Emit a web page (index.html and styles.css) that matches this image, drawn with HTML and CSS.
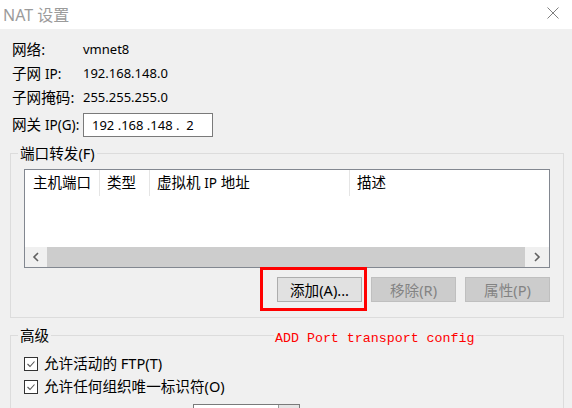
FILE: index.html
```html
<!DOCTYPE html>
<html lang="zh-CN">
<head>
<meta charset="utf-8">
<title>NAT 设置</title>
<link rel="stylesheet" href="styles.css">
</head>
<body>
<div class="dialog">
  <header class="titlebar">
    <span class="title">NAT 设置</span>
    <svg class="close" width="12" height="12" viewBox="0 0 12 12" aria-label="关闭">
      <path d="M0.5 0.5 L11.5 11.5 M11.5 0.5 L0.5 11.5" stroke="#7f7f7f" stroke-width="1" fill="none"/>
    </svg>
  </header>
  <main class="content">
    <div class="info">
      <span class="lbl">网络:</span><span class="val">vmnet8</span>
      <span class="lbl">子网 <span class="lat">IP:</span></span><span class="val">192.168.148.0</span>
      <span class="lbl">子网掩码:</span><span class="val">255.255.255.0</span>
      <span class="lbl gw">网关 <span class="lat">IP(G):</span></span><span class="ipbox">192 .168 .148 .  2</span>
    </div>

    <fieldset class="group">
      <legend>端口转发(F)</legend>
      <div class="listview">
        <div class="lv-head">
          <span class="col c1">主机端口</span>
          <span class="col c2">类型</span>
          <span class="col c3">虚拟机 <span class="lat">IP</span> 地址</span>
          <span class="col c4">描述</span>
        </div>
        <div class="lv-body"></div>
        <div class="hscroll">
          <span class="sb-btn left">
            <svg width="8" height="10" viewBox="0 0 8 10"><path d="M6 1 L2 5 L6 9" stroke="#606060" stroke-width="1.6" fill="none"/></svg>
          </span>
          <span class="sb-thumb"></span>
          <span class="sb-btn right">
            <svg width="8" height="10" viewBox="0 0 8 10"><path d="M2 1 L6 5 L2 9" stroke="#606060" stroke-width="1.6" fill="none"/></svg>
          </span>
        </div>
      </div>
      <div class="buttons">
        <span class="btn-wrap">
          <button class="btn">添加(A)...</button>
          <span class="mark"></span>
        </span>
        <button class="btn" disabled>移除(R)</button>
        <button class="btn" disabled>属性(P)</button>
      </div>
    </fieldset>

    <fieldset class="group adv">
      <legend>高级<span class="note">ADD Port transport config</span></legend>
      <label class="check"><span class="box"><svg width="12" height="12" viewBox="0 0 12 12"><path d="M2.5 6 L5 8.5 L9.5 3.5" stroke="#555" stroke-width="1.1" fill="none"/></svg></span>允许活动的 FTP(T)</label>
      <label class="check"><span class="box"><svg width="12" height="12" viewBox="0 0 12 12"><path d="M2.5 6 L5 8.5 L9.5 3.5" stroke="#555" stroke-width="1.1" fill="none"/></svg></span>允许任何组织唯一标识符(O)</label>
      <div class="combo"><span class="combo-btn"></span></div>
    </fieldset>
  </main>
</div>
</body>
</html>
```

FILE: styles.css
```css
* { box-sizing: border-box; }

html, body {
  margin: 0;
  padding: 0;
}

body {
  width: 572px;
  height: 408px;
  overflow: hidden;
  background: #f0f0f0;
  font-family: "Noto Sans", "Noto Sans CJK SC", sans-serif;
  font-size: 14.6px;
  color: #000;
}

.dialog {
  width: 572px;
  height: 408px;
}

.titlebar {
  height: 29px;
  background: #fff;
  display: flex;
  align-items: center;
  justify-content: space-between;
  padding: 0 13px 0 3px;
}

.title {
  font-size: 16px;
  color: #9b9b9b;
  line-height: 20px;
}

.close {
  display: block;
  margin-top: -3px;
}

.content {
  padding-top: 8px;
}

.info {
  display: grid;
  grid-template-columns: 71px max-content;
  grid-template-rows: 24px 24px 24px 28px;
  align-items: center;
  padding-left: 12px;
}

.lbl {
  line-height: 24px;
  white-space: nowrap;
}

.lat {
  font-size: 13.5px;
}

.lbl.gw, .ipbox {
  align-self: end;
}

.val {
  font-size: 13px;
  line-height: 24px;
}

.ipbox {
  width: 130px;
  height: 24px;
  border: 1px solid #7a7a7a;
  background: #fff;
  font-size: 13px;
  line-height: 22px;
  padding-left: 8px;
  white-space: pre;
}

.group {
  position: relative;
  margin: 7px 8px 0 10px;
  padding: 7px 13px 15px 13px;
  border: 1px solid #dcdcdc;
  min-width: 0;
}

.group legend {
  position: relative;
  margin-left: -6px;
  padding: 0 2px;
  line-height: 18px;
  font-size: 14.6px;
}

.listview {
  height: 99px;
  border: 1px solid #828790;
  background: #fff;
  display: flex;
  flex-direction: column;
}

.lv-head {
  height: 26px;
  display: flex;
  font-size: 14.5px;
}

.col {
  line-height: 25px;
  height: 26px;
  padding-left: 7px;
  border-right: 1px solid #e5e5e5;
  white-space: nowrap;
}

.c1 { width: 75px; padding-left: 8px; }
.c2 { width: 50px; }
.c3 { width: 200px; }
.c4 { flex: 1; border-right: none; }

.lv-body {
  flex: 1;
}

.hscroll {
  height: 20px;
  display: flex;
  background: #f0f0f0;
}

.sb-btn {
  display: flex;
  align-items: center;
  justify-content: center;
  background: #f0f0f0;
}

.sb-btn.left { width: 22px; }
.sb-btn.right { width: 24px; }

.sb-thumb {
  flex: 1;
  background: #cdcdcd;
}

.buttons {
  display: flex;
  justify-content: flex-end;
  gap: 9px;
  margin-top: 9px;
}

.btn-wrap {
  position: relative;
  display: block;
}

.btn {
  display: block;
  width: 85px;
  height: 25px;
  border: 1px solid #adadad;
  background: #e1e1e1;
  font-family: inherit;
  font-size: 14.6px;
  color: #000;
  padding: 0;
  line-height: 22px;
}

.btn:disabled {
  background: #cccccc;
  border-color: #bfbfbf;
  color: #838383;
}

.mark {
  position: absolute;
  left: -17px;
  top: -10px;
  width: 107px;
  height: 44px;
  border: 3px solid #ff0000;
}

.adv {
  margin-top: 8px;
  padding: 8px 13px 0 13px;
  height: 120px;
}

.note {
  position: absolute;
  left: 256px;
  top: 4px;
  line-height: 18px;
  font-family: "Liberation Mono", monospace;
  font-size: 13.3px;
  color: #ff0000;
  background: #f0f0f0;
  white-space: nowrap;
  padding: 0 1px;
}

.check {
  display: flex;
  align-items: center;
  gap: 6px;
  height: 23px;
  line-height: 23px;
}

.box {
  width: 14px;
  height: 14px;
  border: 1px solid #333;
  background: #fff;
  display: flex;
  align-items: center;
  justify-content: center;
}

.box svg { display: block; }

.combo {
  margin: 6px 0 0 169px;
  width: 107px;
  height: 22px;
  border: 1px solid #7a7a7a;
  background: #fff;
  display: flex;
  justify-content: flex-end;
}

.combo-btn {
  width: 21px;
  border-left: 1px solid #9a9a9a;
  background: #e5e5e5;
}
```
